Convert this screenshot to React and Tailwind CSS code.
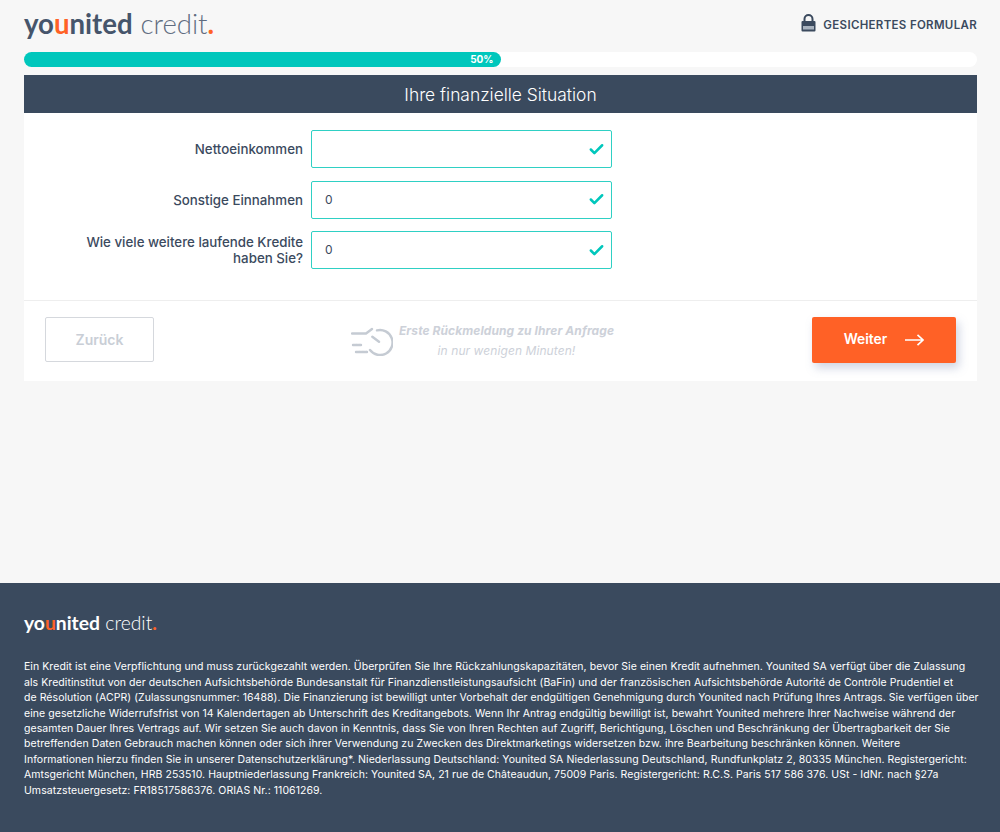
import React from 'react';
import { Check } from 'lucide-react';

const FONT = "font-['Inter','Open_Sans',sans-serif]";

const FOOTER_LINES = [
  'Ein Kredit ist eine Verpflichtung und muss zurückgezahlt werden. Überprüfen Sie Ihre Rückzahlungskapazitäten, bevor Sie einen Kredit aufnehmen. Younited SA verfügt über die Zulassung',
  'als Kreditinstitut von der deutschen Aufsichtsbehörde Bundesanstalt für Finanzdienstleistungsaufsicht (BaFin) und der französischen Aufsichtsbehörde Autorité de Contrôle Prudentiel et',
  'de Résolution (ACPR) (Zulassungsnummer: 16488). Die Finanzierung ist bewilligt unter Vorbehalt der endgültigen Genehmigung durch Younited nach Prüfung Ihres Antrags. Sie verfügen über',
  'eine gesetzliche Widerrufsfrist von 14 Kalendertagen ab Unterschrift des Kreditangebots. Wenn Ihr Antrag endgültig bewilligt ist, bewahrt Younited mehrere Ihrer Nachweise während der',
  'gesamten Dauer Ihres Vertrags auf. Wir setzen Sie auch davon in Kenntnis, dass Sie von Ihren Rechten auf Zugriff, Berichtigung, Löschen und Beschränkung der Übertragbarkeit der Sie',
  'betreffenden Daten Gebrauch machen können oder sich ihrer Verwendung zu Zwecken des Direktmarketings widersetzen bzw. ihre Bearbeitung beschränken können. Weitere',
  'Informationen hierzu finden Sie in unserer Datenschutzerklärung*. Niederlassung Deutschland: Younited SA Niederlassung Deutschland, Rundfunkplatz 2, 80335 München. Registergericht:',
  'Amtsgericht München, HRB 253510. Hauptniederlassung Frankreich: Younited SA, 21 rue de Châteaudun, 75009 Paris. Registergericht: R.C.S. Paris 517 586 376. USt - IdNr. nach §27a',
  'Umsatzsteuergesetz: FR18517586376. ORIAS Nr.: 11061269.',
];

const Logo = ({ size, first, second }) => (
  <div className={`font-['Lato',sans-serif] whitespace-nowrap leading-none ${size}`}>
    <span className={`font-bold ${first}`}>yo</span>
    <span className="font-bold text-[#ff6126]">u</span>
    <span className={`font-bold ${first}`}>nited</span>
    <span className={`font-light ml-[0.28em] ${second}`}>credit</span>
    <span className="font-bold text-[#ff6126]">.</span>
  </div>
);

const Field = ({ label, value }) => (
  <div className="flex items-center h-[38px]">
    <label className="w-[279px] text-right text-[13.3px] leading-[16px] font-medium text-[#3b4a5e]">{label}</label>
    <div className="ml-[8px] w-[301px] h-[38px] bg-white border border-[#2fd0c4] rounded-[2px] flex items-center justify-between pl-[13px] pr-[6px]">
      <span className="text-[12px] tracking-[0.5px] text-[#3b4a5e]">{value}</span>
      <Check className="w-[17px] h-[17px] text-[#00c7bc]" strokeWidth={3.6} />
    </div>
  </div>
);

const App = () => {
  return (
    <div className={`${FONT} w-full h-[832px] bg-[#f7f7f7] flex flex-col overflow-hidden`}>
      <div className="flex-1 pl-6 pr-[23px]">
        {/* Header */}
        <div className="h-[52px] flex items-center justify-between">
          <Logo size="text-[27.6px] mt-[-4px]" first="text-[#46556b]" second="text-[#5f6c80]" />
          <div className="flex items-center gap-[7px]">
            <svg width="15" height="18" viewBox="0 0 15 18" className="mt-[-7px]">
              <path d="M3.5 8V5a4 4 0 0 1 8 0v3" fill="none" stroke="#3b4a5e" strokeWidth="2" />
              <rect x="0.5" y="7" width="14" height="10.5" rx="1" fill="#3b4a5e" />
              <rect x="2" y="12" width="11" height="3.5" fill="#a9b3bf" />
            </svg>
            <span className="text-[11.5px] font-semibold text-[#3b4a5e] tracking-[0.32px]">GESICHERTES FORMULAR</span>
          </div>
        </div>

        {/* Progress */}
        <div className="h-[15px] rounded-full bg-white">
          <div className="h-full w-1/2 bg-[#00c7bc] rounded-full flex items-center justify-end pr-[7px]">
            <span className="text-[10px] font-bold text-white">50%</span>
          </div>
        </div>

        {/* Form card */}
        <div className="mt-[8px] bg-white">
          <div className="h-[38px] pt-[3px] bg-[#3a4a5e] flex items-center justify-center text-[17.4px] font-light text-white">
            Ihre finanzielle Situation
          </div>
          <div className="pt-[17px] pb-[31px] flex flex-col gap-[12.5px] border-b border-[#eeeeee]">
            <Field label="Nettoeinkommen" value="" />
            <Field label="Sonstige Einnahmen" value="0" />
            <Field
              label={<>Wie viele weitere laufende Kredite<br />haben Sie?</>}
              value="0"
            />
          </div>
          <div className="h-[80px] px-[21px] flex items-center justify-between">
            <button className="w-[109px] h-[45px] mt-[-3px] border border-[#d5d8dd] rounded-[2px] text-[14px] font-semibold text-[#c9ced6] bg-white">
              Zurück
            </button>
            <div className="flex items-center gap-[6px] mr-[1px]">
              <svg width="42" height="31" viewBox="0 0 42 31" fill="none" stroke="#c5cbd3" strokeWidth="2.4" strokeLinecap="round" className="mt-[-1px]">
                <path d="M26 5.4A12.5 12.5 0 1 1 19 25" />
                <path d="M1 8.5H15L21 4M21.3 11.7L28 16.7" />
                <path d="M2 20h8M5 27h11" strokeDasharray="3 0.6" />
              </svg>
              <div className="text-[12px] tracking-[0.08px] italic text-center leading-[20px] text-[#cdd1d9]">
                <div className="font-bold">Erste Rückmeldung zu Ihrer Anfrage</div>
                <div>in nur wenigen Minuten!</div>
              </div>
            </div>
            <button className="w-[144px] h-[46px] mt-[-3px] bg-[#ff6126] rounded-[2px] shadow-[3px_5px_10px_rgba(120,135,175,0.35)] text-white text-[13.8px] font-semibold flex items-center justify-center gap-[18px]">
              Weiter
              <svg width="19" height="12" viewBox="0 0 19 12" fill="none" stroke="currentColor" strokeWidth="1.6">
                <path d="M0 6h18M12.5 0.8L18 6l-5.5 5.2" />
              </svg>
            </button>
          </div>
        </div>
      </div>

      {/* Footer */}
      <footer className="h-[249px] bg-[#3a4a5e] pl-6 pt-[30px]">
        <Logo size="text-[19.3px]" first="text-white" second="text-white" />
        <div className="mt-[27px] text-[10.5px] tracking-[0.06px] leading-[15.4px] text-white">
          {FOOTER_LINES.map((line) => (
            <div key={line} className="whitespace-nowrap">{line}</div>
          ))}
        </div>
      </footer>
    </div>
  );
};

export default App;
